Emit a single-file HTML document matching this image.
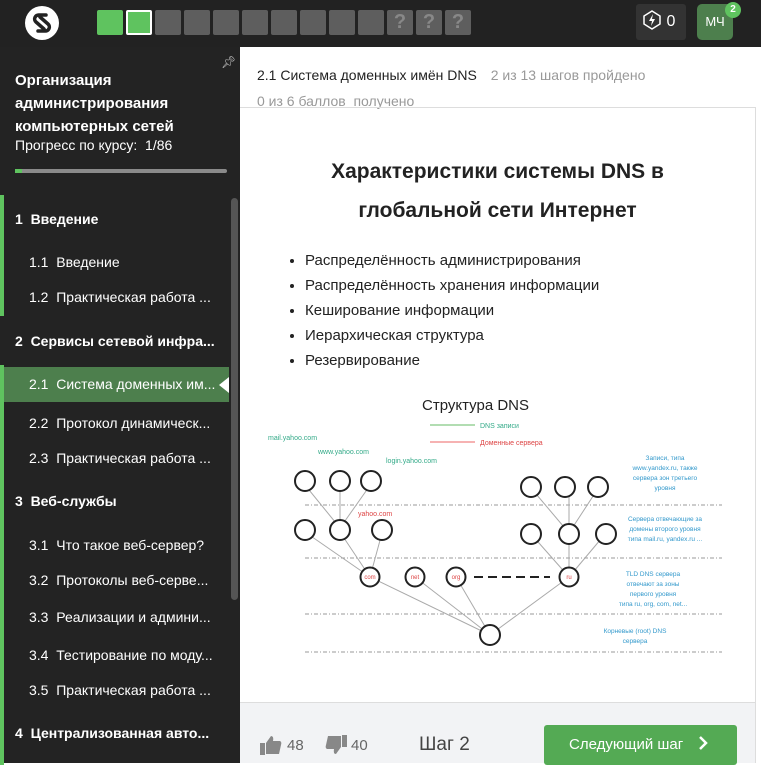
<!DOCTYPE html>
<html><head><meta charset="utf-8"><style>
*{box-sizing:border-box;margin:0;padding:0}
body{width:761px;height:763px;overflow:hidden;font-family:"Liberation Sans",sans-serif;background:#fff;position:relative}
.top{position:absolute;left:0;top:0;width:761px;height:47px;background:#222}
.sq{position:absolute;top:10px;width:26px;height:25px;background:#5e5e5e;border-radius:2px;color:#888;font-size:20px;font-weight:bold;text-align:center;line-height:25px}
.side{position:absolute;left:0;top:47px;width:240px;height:716px;background:#232323;color:#fff}
.it{position:absolute;left:0;width:230px;font-size:14px;white-space:nowrap}
.sec{font-weight:bold;left:15px}
.sub{left:29px}
.main{position:absolute;left:240px;top:47px;width:521px;height:716px}
li{margin-bottom:6px}
</style></head><body>
<div class="top">
 <svg style="position:absolute;left:24px;top:5px" width="36" height="36" viewBox="0 0 36 36"><circle cx="18" cy="18" r="17" fill="#fff"/><path d="M22 10 H15 a4 4 0 0 0 -3 7 L20 24 M14 26 H21 a4 4 0 0 0 3 -7 L16 12" stroke="#222" stroke-width="3.5" fill="none" stroke-linecap="round" stroke-linejoin="round"/></svg>
 <div class="sq" style="left:97px;background:#5fc35f"></div>
 <div class="sq" style="left:126px;background:#5fc35f;border:2px solid #fff"></div>
 <div class="sq" style="left:155px"></div><div class="sq" style="left:184px"></div><div class="sq" style="left:213px"></div><div class="sq" style="left:242px"></div><div class="sq" style="left:271px"></div><div class="sq" style="left:300px"></div><div class="sq" style="left:329px"></div><div class="sq" style="left:358px"></div>
 <div class="sq" style="left:387px">?</div><div class="sq" style="left:416px">?</div><div class="sq" style="left:445px">?</div>
 <div style="position:absolute;left:636px;top:4px;width:50px;height:36px;background:#333;border-radius:3px;color:#fff;font-size:16px;line-height:36px;padding-left:6px">
  <svg width="20" height="20" viewBox="0 0 20 20" style="vertical-align:-4px"><path d="M10 1 L18 6 L18 14 L10 19 L2 14 L2 6Z" fill="none" stroke="#fff" stroke-width="1.5"/><path d="M11 4 L7 11 L10 11 L9 16 L13 9 L10 9Z" fill="#fff"/></svg> 0</div>
 <div style="position:absolute;left:697px;top:4px;width:36px;height:36px;background:#4d7f4d;border-radius:5px;color:#fff;font-size:13px;line-height:36px;text-align:center">МЧ</div>
 <div style="position:absolute;left:725px;top:2px;width:16px;height:16px;background:#5fc35f;border-radius:8px;color:#fff;font-size:10px;font-weight:bold;text-align:center;line-height:16px">2</div>
</div>
<div class="side">
 <div style="position:absolute;left:221px;top:8px;color:#ccc;font-size:12px">&#x1F4CC;&#xFE0E;</div>
 <div style="position:absolute;left:15px;top:22px;font-size:15px;font-weight:bold;line-height:23px">Организация<br>администрирования<br>компьютерных сетей</div>
 <div style="position:absolute;left:15px;top:90px;font-size:14px">Прогресс по курсу:&nbsp; 1/86</div>
 <div style="position:absolute;left:15px;top:122px;width:212px;height:4px;background:#8a8a8a;border-radius:2px"><div style="width:7px;height:4px;background:#5fc35f"></div></div>
 <div style="position:absolute;left:0;top:148px;width:4px;height:121px;background:#5fc35f"></div>
 <div style="position:absolute;left:0;top:318px;width:4px;height:400px;background:#5fc35f"></div>
 <div style="position:absolute;left:4px;top:320px;width:225px;height:35px;background:#4d7f4d"></div>
 <div style="position:absolute;left:219px;top:330px;width:0;height:0;border-top:8px solid transparent;border-bottom:8px solid transparent;border-right:10px solid #fff"></div>
 <div style="position:absolute;left:231px;top:151px;width:7px;height:402px;background:#555;border-radius:4px"></div>
 <div class="it sec" style="top:164px">1&nbsp; Введение</div>
 <div class="it sub" style="top:207px">1.1&nbsp; Введение</div>
 <div class="it sub" style="top:242px">1.2&nbsp; Практическая работа ...</div>
 <div class="it sec" style="top:286px">2&nbsp; Сервисы сетевой инфра...</div>
 <div class="it sub" style="top:329px">2.1&nbsp; Система доменных им...</div>
 <div class="it sub" style="top:368px">2.2&nbsp; Протокол динамическ...</div>
 <div class="it sub" style="top:403px">2.3&nbsp; Практическая работа ...</div>
 <div class="it sec" style="top:446px">3&nbsp; Веб-службы</div>
 <div class="it sub" style="top:490px">3.1&nbsp; Что такое веб-сервер?</div>
 <div class="it sub" style="top:525px">3.2&nbsp; Протоколы веб-серве...</div>
 <div class="it sub" style="top:562px">3.3&nbsp; Реализации и админи...</div>
 <div class="it sub" style="top:600px">3.4&nbsp; Тестирование по моду...</div>
 <div class="it sub" style="top:635px">3.5&nbsp; Практическая работа ...</div>
 <div class="it sec" style="top:678px">4&nbsp; Централизованная авто...</div>
</div>
<div class="main">
 <div style="position:absolute;left:17px;top:20px;font-size:14px;color:#222">2.1 Система доменных имён DNS <span style="color:#999;margin-left:10px">2 из 13 шагов пройдено</span></div>
 <div style="position:absolute;left:17px;top:46px;font-size:14px;color:#999">0 из 6 баллов&nbsp; получено</div>
 <div style="position:absolute;left:0;top:60px;width:515px;height:1px;background:#ddd"></div>
 <div style="position:absolute;right:5px;top:60px;width:1px;height:656px;background:#ddd"></div>
 <div style="position:absolute;left:0;top:105px;width:515px;text-align:center;font-size:21px;font-weight:bold;line-height:39px;color:#222">Характеристики системы DNS в<br>глобальной сети Интернет</div>
 <ul style="position:absolute;left:65px;top:204px;font-size:15px;color:#222;line-height:19px">
  <li>Распределённость администрирования</li><li>Распределённость хранения информации</li><li>Кеширование информации</li><li>Иерархическая структура</li><li>Резервирование</li></ul>
 <svg style="position:absolute;left:20px;top:343px" width="480" height="280" viewBox="0 0 480 280" font-family="Liberation Sans">
  <text x="162" y="20" font-size="15" fill="#222">Структура DNS</text>
  <g font-size="7"><path d="M170 35 H215" stroke="#6b6" stroke-width="1"/><path d="M170 52 H215" stroke="#e66"/><text x="220" y="38" fill="#3a8">DNS записи</text><text x="220" y="55" fill="#d44">Доменные сервера</text>
  <text x="8" y="50" fill="#3a8">mail.yahoo.com</text><text x="58" y="64" fill="#3a8">www.yahoo.com</text><text x="126" y="73" fill="#3a8">login.yahoo.com</text><text x="98" y="126" fill="#d44">yahoo.com</text>
  <g fill="#39c" text-anchor="middle" font-size="6.5"><text x="405" y="70">Записи, типа</text><text x="405" y="80">www.yandex.ru, также</text><text x="405" y="90">сервера  зон третьего</text><text x="405" y="100">уровня</text>
  <text x="405" y="131">Сервера отвечающие за</text><text x="405" y="141">домены второго уровня</text><text x="405" y="151">типа mail.ru, yandex.ru ...</text>
  <text x="393" y="186">TLD DNS сервера</text><text x="393" y="196">отвечают за зоны</text><text x="393" y="206">первого уровня</text><text x="393" y="216">типа ru, org, com, net...</text>
  <text x="375" y="243">Корневые (root) DNS</text><text x="375" y="253">сервера</text></g></g>
  <g stroke="#999" stroke-dasharray="4 2 1 2" stroke-width="1"><path d="M45 115H462M45 168H462M45 224H462M45 262H462"/></g>
  <g stroke="#aaa" stroke-width="1"><path d="M45 95L80 138M80 93V138M111 94L80 138M45 142L110 187M80 142L110 187M122 143L110 187M110 187L230 245M155 187L230 245M196 187L230 245M309 187L230 245M271 98L309 143M309 97V143M339 97L309 143M271 144L309 187M309 143V187M346 143L309 187"/></g>
  <path d="M214 187H290" stroke="#222" stroke-width="2" stroke-dasharray="9 5"/>
  <g fill="#fff" stroke="#222" stroke-width="2"><circle cx="45" cy="91" r="10"/><circle cx="80" cy="91" r="10"/><circle cx="111" cy="91" r="10"/><circle cx="45" cy="140" r="10"/><circle cx="80" cy="140" r="10"/><circle cx="122" cy="140" r="10"/><circle cx="110" cy="187" r="9.5"/><circle cx="155" cy="187" r="9.5"/><circle cx="196" cy="187" r="9.5"/><circle cx="309" cy="187" r="9.5"/><circle cx="230" cy="245" r="10"/><circle cx="271" cy="97" r="10"/><circle cx="305" cy="97" r="10"/><circle cx="338" cy="97" r="10"/><circle cx="271" cy="144" r="10"/><circle cx="309" cy="144" r="10"/><circle cx="346" cy="144" r="10"/></g>
  <g fill="#d44" font-size="6" text-anchor="middle"><text x="110" y="189">com</text><text x="155" y="189">net</text><text x="196" y="189">org</text><text x="309" y="189">ru</text></g>
 </svg>
 <div style="position:absolute;left:0;top:655px;width:515px;height:61px;background:#f2f3f5;border-top:1px solid #ddd">
  <svg style="position:absolute;left:20px;top:32px" width="22" height="20" viewBox="0 0 22 20"><rect x="0" y="8" width="5" height="12" fill="#888"/><path d="M6 8 L11 1 Q14 1 13 6 L20 6 Q22 7 21 10 L19 19 L6 19Z" fill="#888"/></svg>
  <span style="position:absolute;left:47px;top:34px;font-size:15px;color:#666">48</span>
  <svg style="position:absolute;left:85px;top:32px" width="22" height="20" viewBox="0 0 22 20"><rect x="17" y="0" width="5" height="12" fill="#888"/><path d="M16 12 L11 19 Q8 19 9 14 L2 14 Q0 13 1 10 L3 1 L16 1Z" fill="#888"/></svg>
  <span style="position:absolute;left:111px;top:34px;font-size:15px;color:#666">40</span>
  <span style="position:absolute;left:179px;top:31px;font-size:19px;color:#444">Шаг 2</span>
  <div style="position:absolute;left:304px;top:22px;width:193px;height:40px;background:#54aa54;border-radius:3px;color:#fff;font-size:15px;line-height:40px;padding-left:25px">Следующий шаг <svg width="12" height="14" viewBox="0 0 12 14" style="margin-left:10px;vertical-align:-1px"><path d="M3 1 L9 7 L3 13" stroke="#fff" stroke-width="2.5" fill="none"/></svg></div>
 </div>
</div>
</body></html>
